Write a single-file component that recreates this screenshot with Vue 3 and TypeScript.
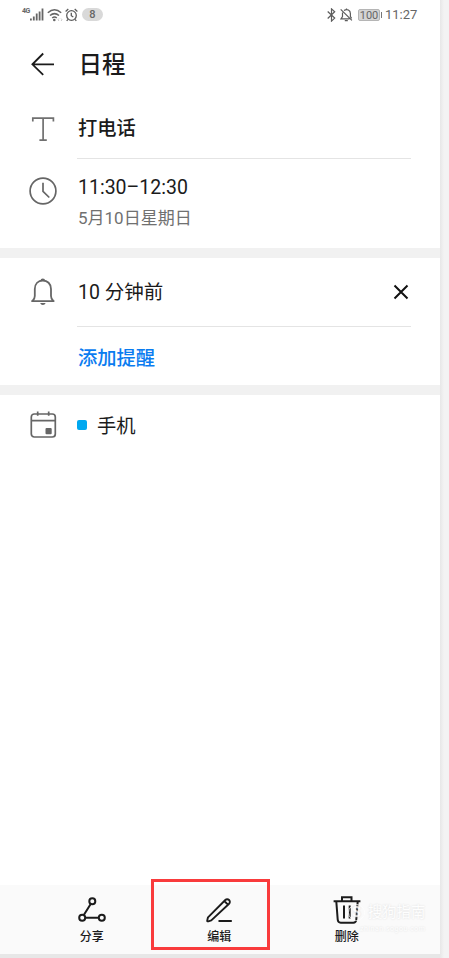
<script setup lang="ts">
interface Action {
  id: 'share' | 'edit' | 'remove'
  label: string
}

const actions: Action[] = [
  { id: 'share', label: '分享' },
  { id: 'edit', label: '编辑' },
  { id: 'remove', label: '删除' },
]
const signalBars: number[] = [2, 4, 7, 9, 12]
</script>

<template>
  <div class="page">
    <main class="screen">
      <div class="status">
        <span class="network">4G</span>
        <svg class="signal" width="14" height="13" viewBox="0 0 14 13" fill="#666">
          <rect v-for="(h, i) in signalBars" :key="i" :x="i * 2.9" :y="12.5 - h" width="1.8" :height="h" />
        </svg>
        <svg class="wifi" width="16" height="14" viewBox="0 0 16 14" fill="none" stroke="#666" stroke-width="1.5">
          <path d="M.8 4.8Q7.5-1.2 14.2 4.8M3 7.5q4.5-3.8 9 0M5.2 10q2.3-1.8 4.6 0" />
          <circle cx="7.3" cy="12" r="1.3" fill="#666" stroke="none" />
          <path d="m12 10.5-1 1.3 1 1.2m2-2.5 1 1.3-1 1.2" stroke="#bbb" stroke-width=".8" />
        </svg>
        <svg class="alarm" width="13" height="14" viewBox="0 0 13 14" fill="none" stroke="#5c5c5c" stroke-width="1.3">
          <circle cx="6.5" cy="7.5" r="4.8" />
          <path d="M6.3 4.8v2.9l2 1.3M.6 3.4 3.3 1.1M12.4 3.4 9.7 1.1M3 11.4l-1.3 1.5M10 11.4l1.3 1.5" />
        </svg>
        <span class="count">8</span>
        <svg class="bluetooth" width="9" height="14" viewBox="0 0 9 14" fill="none" stroke="#5c5c5c" stroke-width="1.2">
          <path d="m.7 3.5 7 6.6-3.2 3V.9l3.2 2.9-7 6.7" />
        </svg>
        <svg class="muted" width="13" height="14" viewBox="0 0 13 14" fill="none" stroke="#5c5c5c" stroke-width="1.2">
          <path d="M2.5 4.5v4L1 10.8h8.5M4 2.6C7.2.2 10.4 2.6 10.4 5.4v3.2l1.2 1.8M.7 1.4l11.2 11M4.8 12.7h3M6.5.5v1.2" />
        </svg>
        <span class="battery">100</span>
        <span class="clock">11:27</span>
      </div>

      <header class="header">
        <svg class="back" width="24" height="24" viewBox="0 0 24 24" fill="none" stroke="#1b1b1b" stroke-width="1.8">
          <path d="M23 12.3H1.6M12.2 1.5 1.4 12.3l10.8 10.5" />
        </svg>
        <h1>日程</h1>
      </header>

      <section class="row title-row">
        <svg class="icon" width="28" height="28" viewBox="0 0 28 28" fill="none" stroke="#707070" stroke-width="1.7">
          <path d="M3.8 6.5V3.2h20.6v3.3M14.1 3.2v22M10.4 25.1h7.4" />
        </svg>
        <div class="body divided"><span class="subject">打电话</span></div>
      </section>

      <section class="row time-row">
        <svg class="icon" width="28" height="28" viewBox="0 0 28 28" fill="none" stroke="#666" stroke-width="1.7">
          <circle cx="14" cy="14" r="12.9" />
          <path d="M14 5.8v8.5l6.3 6.2" />
        </svg>
        <div class="body times">
          <span class="time">11:30–12:30</span>
          <span class="date">5月10日星期日</span>
        </div>
      </section>

      <section class="row remind-row">
        <svg class="icon" width="28" height="28" viewBox="0 0 28 28" fill="none" stroke="#666" stroke-width="1.8">
          <path d="M2.3 23.1h23.1M3.5 23c1.800-1.700 2.300-2.800 2.300-5V11c0-5.300 3.400-8.500 8-8.500s8.200 3.200 8.200 8.500v7c0 2.200.5 3.300 2.300 5" />
          <path d="M11.5 2.8a2.3 2.3 0 0 1 4.6 0ZM11.2 25h5.4c-.6 2.5-4.8 2.5-5.4 0Z" fill="#666" stroke="none" />
        </svg>
        <div class="body divided">
          <span class="time">10 分钟前</span>
          <svg class="close" width="16" height="16" viewBox="0 0 16 16" fill="none" stroke="#111" stroke-width="2">
            <path d="m1.5 1.5 13 13m0-13-13 13" />
          </svg>
        </div>
      </section>
      <div class="add"><span>添加提醒</span></div>

      <section class="row calendar-row">
        <svg class="icon" width="28" height="28" viewBox="0 0 28 28" fill="none" stroke="#666" stroke-width="1.7">
          <rect x="2.3" y="3" width="24" height="23" rx="3" />
          <path d="M2.3 9.7h24M8.7.5v4.300M19.700.5v4.300" />
          <rect x="16.5" y="17" width="6.2" height="6.2" rx="1" fill="#666" stroke="none" />
        </svg>
        <div class="body"><i class="swatch"></i><span class="account">手机</span></div>
      </section>

      <nav class="toolbar">
        <div v-for="action in actions" :key="action.id" class="action" :class="action.id">
          <svg v-if="action.id === 'share'" width="30" height="30" viewBox="0 0 30 30" fill="none" stroke="#1b1b1b" stroke-width="2">
            <circle cx="15.3" cy="6.3" r="3" />
            <circle cx="5.2" cy="22.7" r="3" />
            <circle cx="24.8" cy="22.7" r="3" />
            <path d="m13.7 8.9-6.9 11.2M8.2 22.7h13.6" />
          </svg>
          <svg v-else-if="action.id === 'edit'" width="30" height="30" viewBox="0 0 30 30" fill="none" stroke="#1b1b1b" stroke-width="1.9" stroke-linejoin="round">
            <path d="M3.200 25.600 4 22.300 21.300 5a2.300 2.300 0 0 1 3.800 3.700L7.300 25.400l-3 .9q-1.300.3-1.100-.7ZM20.300 6l3.600 3.700M14.500 26h13.300" />
          </svg>
          <svg v-else width="30" height="30" viewBox="0 0 30 30" fill="none" stroke="#1b1b1b" stroke-width="2">
            <path d="M1.6 6.3h26.8M10 6V2.3h9.5V6M4.3 6.500l1.400 18q.2 3.200 3 3.200h12.600q2.800 0 3-3.200l1.400-18M12 10.500v13M17.700 10.500v13" />
          </svg>
          <span>{{ action.label }}</span>
        </div>
      </nav>
      <div class="highlight"></div>
      <div class="watermark">
        <div class="brand"><b>S</b>搜狗指南</div>
        <small>zhinan.sogou.com</small>
      </div>
    </main>
  </div>
</template>

<style>
body {
  margin: 0;
  background: #f1f1f1;
}
</style>

<style scoped>
.page {
  width: 449px;
  height: 958px;
  overflow: hidden;
  background: linear-gradient(90deg, #e7e7e7 440px, #f3f3f3 444px);
  font-family: Roboto, 'Noto Sans CJK SC', sans-serif;
  color: #1b1b1b;
}
.page svg {
  display: block;
  flex: none;
}
.screen {
  position: relative;
  display: flex;
  flex-direction: column;
  box-sizing: border-box;
  width: 440px;
  height: 954px;
  background: #fff;
}
.status {
  display: flex;
  align-items: center;
  height: 29px;
  padding-left: 22px;
  color: #666;
  line-height: 1;
}
.network {
  width: 8px;
  height: 14px;
  font-size: 7px;
  font-weight: 700;
  letter-spacing: -0.5px;
}
.wifi { margin-left: 3px; }
.alarm { margin-left: 2px; }
.count {
  width: 21px;
  height: 13px;
  margin-left: 4px;
  border-radius: 7px;
  background: #d9d9d9;
  font-size: 11px;
  font-weight: 500;
  line-height: 14px;
  text-align: center;
}
.bluetooth { margin-left: 224px; }
.muted { margin-left: 4px; }
.battery {
  position: relative;
  box-sizing: border-box;
  width: 22px;
  height: 12px;
  margin-left: 5px;
  border: 1px solid #b5b5b5;
  border-radius: 2px;
  background: #d4d4d4;
  font-size: 11px;
  line-height: 11px;
  text-align: center;
}
.battery::after {
  content: '';
  position: absolute;
  top: 2px;
  right: -3px;
  width: 1.5px;
  height: 6px;
  background: #777;
}
.clock {
  margin-left: 5px;
  font-size: 13px;
  line-height: 15px;
}
.header {
  display: flex;
  align-items: center;
  height: 69px;
  padding-left: 31px;
}
h1 {
  margin: 0 0 0 23.5px;
  padding-top: 2px;
  font-size: 23.5px;
  font-weight: 500;
  line-height: 30px;
}
.row {
  display: flex;
  flex: none;
  box-sizing: border-box;
  padding: 0 29px;
}
.icon { margin-right: 20px; }
.body {
  display: flex;
  align-items: center;
  flex: 1;
}
.divided { border-bottom: 1px solid #e4e4e4; }
.title-row { height: 61px; }
.title-row .icon { margin-top: 17px; }
.subject {
  padding: 1px 0 0 1px;
  font-size: 19.3px;
  font-weight: 500;
  line-height: 28px;
}
.time-row {
  height: 99px;
  border-bottom: 10px solid #f1f1f1;
}
.time-row .icon { margin-top: 18px; }
.times {
  flex-direction: column;
  align-items: flex-start;
  padding: 16px 0 0 1px;
}
.time {
  font-size: 19.5px;
  line-height: 26px;
}
.date {
  margin-top: 5px;
  color: #707070;
  font-size: 17px;
  line-height: 24px;
}
.remind-row { height: 69px; }
.remind-row .icon { margin-top: 20px; }
.remind-row .time { padding: 2px 0 0 1px; }
.close { margin: 0 2px 0 auto; }
.add {
  display: flex;
  align-items: center;
  flex: none;
  box-sizing: border-box;
  height: 68px;
  padding: 2px 0 0 78px;
  border-bottom: 10px solid #f1f1f1;
  color: #0a7cf0;
  font-size: 19.3px;
  font-weight: 500;
}
.calendar-row { height: 60px; }
.calendar-row .icon { margin-top: 16px; }
.swatch {
  width: 10px;
  height: 10px;
  margin-right: 10px;
  border-radius: 2px;
  background: #00a8f0;
}
.account { font-size: 19.3px; }
.toolbar {
  display: grid;
  grid-template-columns: repeat(3, 127.5px);
  height: 69px;
  margin-top: auto;
  padding-left: 28px;
  background: #fafafa;
}
.action {
  display: flex;
  flex-direction: column;
  align-items: center;
  padding-top: 10px;
  font-size: 12px;
  font-weight: 500;
  line-height: 18px;
}
.action span { margin-top: 3px; }
.highlight {
  position: absolute;
  top: 879px;
  left: 151px;
  box-sizing: border-box;
  width: 119px;
  height: 71px;
  border: 3px solid #f93b3c;
}
.watermark {
  position: absolute;
  top: 900px;
  left: 348px;
  color: #fff;
  text-shadow: 0 0 2px #d4d4d4;
  opacity: 0.8;
}
.brand {
  display: flex;
  align-items: center;
  font-size: 14.3px;
  line-height: 24px;
}
.brand b {
  box-sizing: border-box;
  width: 17px;
  height: 17px;
  margin-right: 3px;
  border: 1px solid #fff;
  border-radius: 50%;
  line-height: 15px;
  text-align: center;
}
.watermark small {
  display: block;
  margin-left: 12px;
  font-size: 7px;
  line-height: 10px;
  letter-spacing: 0.5px;
}
</style>
